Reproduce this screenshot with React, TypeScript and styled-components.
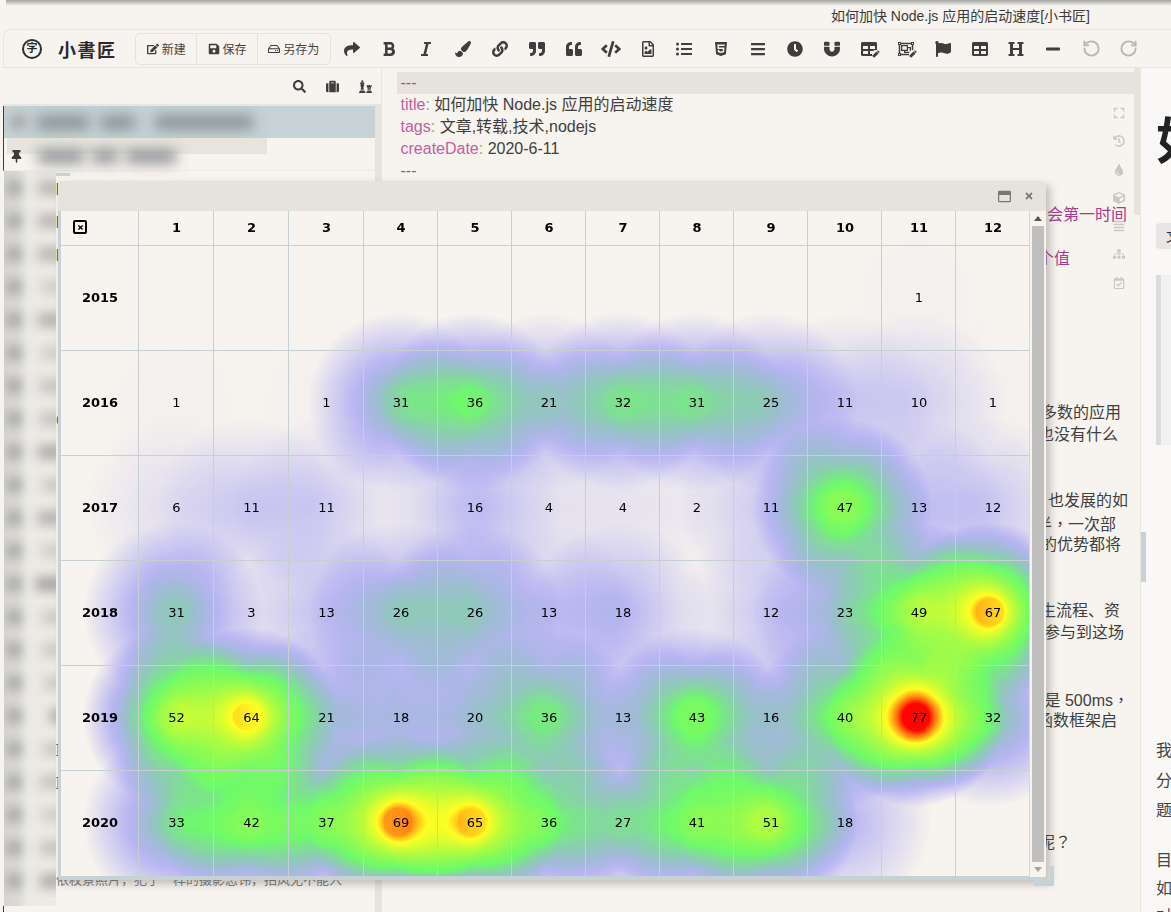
import { useEffect, useRef } from 'react';
import styled, { createGlobalStyle } from 'styled-components';
import {
  FaEdit, FaSave, FaRegHdd, FaShare, FaBold, FaItalic, FaPaintBrush, FaLink, FaQuoteRight, FaQuoteLeft,
  FaCode, FaRegFileImage, FaListUl, FaHtml5, FaBars, FaClock, FaMagnet, FaTable, FaRegObjectGroup, FaFlag,
  FaHeading, FaMinus, FaSearch, FaSuitcase, FaChess, FaThumbtack, FaExpand, FaHistory, FaTint, FaCube,
  FaAlignJustify, FaSitemap, FaRegCalendarCheck, FaRegWindowMaximize, FaTimes, FaPen,
} from 'react-icons/fa';
import { RotateCcw, RotateCw } from 'lucide-react';

const colors = {
  bg: '#f7f3ee',
  panel: '#e6e2dc',
  line: '#e9e5df',
  grid: '#c6d0d3',
  blue: '#c6d2d5',
  icon: '#3e3e3e',
  faint: '#c9c7c3',
};

const sans = `"Liberation Sans", "Noto Sans CJK SC", sans-serif`;

const YEARS = [2015, 2016, 2017, 2018, 2019, 2020];
const COUNTS: (number | null)[][] = [
  [null, null, null, null, null, null, null, null, null, null, 1, null],
  [1, null, 1, 31, 36, 21, 32, 31, 25, 11, 10, 1],
  [6, 11, 11, null, 16, 4, 4, 2, 11, 47, 13, 12],
  [31, 3, 13, 26, 26, 13, 18, null, 12, 23, 49, 67],
  [52, 64, 21, 18, 20, 36, 13, 43, 16, 40, 77, 32],
  [33, 42, 37, 69, 65, 36, 27, 41, 51, 18, null, null],
];
const COL_LEFT = [78, 153, 228, 303, 377, 451, 525, 599, 673, 747, 821, 895];

const HEAT_W = 969;
const HEAT_H = 666;
const HEAT_R = 90;

function makePalette() {
  const c = document.createElement('canvas');
  c.width = 256;
  c.height = 1;
  const ctx = c.getContext('2d')!;
  const g = ctx.createLinearGradient(0, 0, 256, 0);
  g.addColorStop(0.25, 'rgb(0,0,255)');
  g.addColorStop(0.55, 'rgb(0,255,0)');
  g.addColorStop(0.85, 'rgb(255,255,0)');
  g.addColorStop(1, 'rgb(255,0,0)');
  ctx.fillStyle = g;
  ctx.fillRect(0, 0, 256, 1);
  return ctx.getImageData(0, 0, 256, 1).data;
}

function HeatLayer() {
  const ref = useRef<HTMLCanvasElement>(null);

  useEffect(() => {
    const ctx = ref.current!.getContext('2d', { willReadFrequently: true })!;
    COUNTS.forEach((row, r) => {
      row.forEach((value, c) => {
        if (!value) return;
        const x = COL_LEFT[c] + 37 - 3;
        const y = 35 + r * 105 + 52 - 1;
        const g = ctx.createRadialGradient(x, y, HEAT_R * 0.15, x, y, HEAT_R);
        g.addColorStop(0, 'rgba(0,0,0,1)');
        g.addColorStop(1, 'rgba(0,0,0,0)');
        ctx.globalAlpha = value / 77;
        ctx.fillStyle = g;
        ctx.fillRect(x - HEAT_R, y - HEAT_R, HEAT_R * 2, HEAT_R * 2);
      });
    });
    const palette = makePalette();
    const img = ctx.getImageData(0, 0, HEAT_W, HEAT_H);
    const d = img.data;
    for (let i = 3; i < d.length; i += 4) {
      const a = d[i];
      if (!a) continue;
      d[i - 3] = palette[a * 4];
      d[i - 2] = palette[a * 4 + 1];
      d[i - 1] = palette[a * 4 + 2];
    }
    ctx.putImageData(img, 0, 0);
  }, []);

  return <HeatCanvas ref={ref} width={HEAT_W} height={HEAT_H} />;
}

const TOOLS = [
  <FaShare />, <FaBold />, <FaItalic />, <FaPaintBrush />, <FaLink />, <FaQuoteRight />, <FaQuoteLeft />,
  <FaCode size={20} />, <FaRegFileImage />, <FaListUl />, <FaHtml5 />, <FaBars />, <FaClock />, <FaMagnet />,
];

const SIDE_ROWS = [
  { w: 26, tone: 0.5, mark: '[' },
  { w: 26, tone: 0.5, mark: '[' },
  { w: 26, tone: 0.5, mark: '[' },
  { w: 22, tone: 0.28, mark: '' },
  { w: 26, tone: 0.55, mark: '' },
  { w: 22, tone: 0.28, mark: '' },
  { w: 24, tone: 0.38, mark: '' },
  { w: 24, tone: 0.38, mark: '(' },
  { w: 26, tone: 0.62, mark: '' },
  { w: 22, tone: 0.32, mark: '' },
  { w: 26, tone: 0.55, mark: '' },
  { w: 22, tone: 0.28, mark: '' },
  { w: 28, tone: 0.7, mark: '' },
  { w: 22, tone: 0.32, mark: '' },
  { w: 22, tone: 0.32, mark: '' },
  { w: 20, tone: 0.32, mark: '' },
  { w: 14, tone: 0.65, mark: '' },
  { w: 22, tone: 0.32, mark: ']' },
  { w: 24, tone: 0.38, mark: ']' },
  { w: 22, tone: 0.28, mark: '' },
  { w: 24, tone: 0.38, mark: '' },
];

export default function App() {
  return (
    <Page>
      <GlobalStyle />
      <TopShade />
      <TitleBar>如何加快 Node.js 应用的启动速度[小书匠]</TitleBar>

      <Toolbar>
        <Logo>
          <LogoMark>字</LogoMark>
          <LogoText>小書匠</LogoText>
        </Logo>
        <FileGroup>
          <FileButton $w={61}><FaEdit />新建</FileButton>
          <FileButton $w={61}><FaSave />保存</FileButton>
          <FileButton $w={74}><FaRegHdd />另存为</FileButton>
        </FileGroup>
        {TOOLS.map((icon, i) => <ToolButton key={i}>{icon}</ToolButton>)}
        <ToolButton><PenBadge><FaTable /><FaPen /></PenBadge></ToolButton>
        <ToolButton><PenBadge><FaRegObjectGroup /><FaPen /></PenBadge></ToolButton>
        <ToolButton><FaFlag /></ToolButton>
        <ToolButton><FaTable /></ToolButton>
        <ToolButton><FaHeading /></ToolButton>
        <ToolButton><FaMinus /></ToolButton>
        <HistoryButton><RotateCcw size={19} /></HistoryButton>
        <HistoryButton><RotateCw size={19} /></HistoryButton>
      </Toolbar>

      <Main>
        <Sidebar>
          <SideHeader>
            <SideIcon><FaSearch /></SideIcon>
            <SideIcon><FaSuitcase /></SideIcon>
            <SideIcon><FaChess /></SideIcon>
          </SideHeader>
          <SideBody>
            <NoteList>
              <ActiveNote>
                <BlurDot />
                <BlurText $w={52} $gap={6} />
                <BlurText $w={34} $gap={14} />
                <BlurText $w={98} $gap={0} />
              </ActiveNote>
              <PinnedNote>
                <PinPatch />
                <PinIcon><FaThumbtack /></PinIcon>
                <BlurText $w={46} $gap={2} />
                <BlurText $w={26} $gap={2} />
                <BlurText $w={50} $gap={0} />
              </PinnedNote>
              {SIDE_ROWS.map((row, i) => (
                <NoteRow key={i}>
                  <NoteBlur>
                    <BlurDot />
                    <BlurBar $w={row.w} $tone={row.tone} />
                  </NoteBlur>
                  <NoteMark>{row.mark}</NoteMark>
                </NoteRow>
              ))}
              <NoteRow>
                <NoteBlur>
                  <BlurDot />
                  <BlurBar $w={24} $tone={0.62} />
                </NoteBlur>
                <NoteSnippet>依枚景照片，犯了一样的摄影忌讳，拍风无不能入</NoteSnippet>
              </NoteRow>
              <BlurTail />
              <ListEnd />
            </NoteList>
            <SideScroll />
          </SideBody>
        </Sidebar>

        <Editor>
          <ActiveLine><Meta>---</Meta></ActiveLine>
          <Line><Key>title</Key><Colon>:</Colon> 如何加快 Node.js 应用的启动速度</Line>
          <Line><Key>tags</Key><Colon>:</Colon> 文章,转载,技术,nodejs</Line>
          <Line><Key>createDate</Key><Colon>:</Colon> 2020-6-11</Line>
          <Line><Meta>---</Meta></Line>
          <Line />
          <EndLine $end={1126} $accent>会第一时间</EndLine>
          <Line />
          <EndLine $end={1069} $accent>个值</EndLine>
          <Blank $lines={6} />
          <EndLine $end={1120}>多数的应用</EndLine>
          <EndLine $end={1117}>也没有什么</EndLine>
          <Blank $lines={2} />
          <EndLine $end={1127}>也发展的如</EndLine>
          <EndLine $end={1115}>半<Punct>，</Punct>一次部</EndLine>
          <EndLine $end={1120}>的优势都将</EndLine>
          <Blank $lines={2} />
          <EndLine $end={1119}>生流程、资</EndLine>
          <EndLine $end={1123}>参与到这场</EndLine>
          <Blank $lines={2} />
          <EndLine $end={1128}>是 500ms<Punct>，</Punct></EndLine>
          <EndLine $end={1116}>函数框架启</EndLine>
          <Blank $lines={4} />
          <EndLine $end={1070} $shift={10}>呢<Punct>？</Punct></EndLine>
          <Blank $lines={2} />
          <Line $shift={15}><Fence>```</Fence></Line>
          <SideTools>
            <FaExpand /><FaHistory /><FaTint /><FaCube /><FaAlignJustify /><FaSitemap /><FaRegCalendarCheck />
          </SideTools>
          <EditorScroll />
        </Editor>

        <Preview>
          <ScrollMark />
          <H1>如何加快</H1>
          <TagRow><Tag>文章</Tag></TagRow>
          <Quote />
          <ParaBlock>
            <Para>我们一直在讨论</Para>
            <Para>分享一些经验</Para>
            <Para>题目</Para>
          </ParaBlock>
          <TightBlock>
            <TightPara>目前</TightPara>
            <TightPara>如果</TightPara>
            <TightPara>对于</TightPara>
          </TightBlock>
        </Preview>
      </Main>

      <Dialog>
        <CornerTop />
        <CornerBottom />
        <DialogHeader>
          <MaxIcon><FaRegWindowMaximize /></MaxIcon>
          <CloseIcon><FaTimes /></CloseIcon>
        </DialogHeader>
        <DialogBody>
          <TableArea>
            <HeatLayer />
            <Calendar>
              <thead>
                <tr>
                  <CornerCell><CloseBox><FaTimes /></CloseBox></CornerCell>
                  {COL_LEFT.map((_, i) => <MonthCell key={i} $wide={i < 3}>{i + 1}</MonthCell>)}
                </tr>
              </thead>
              <tbody>
                {COUNTS.map((row, r) => (
                  <tr key={r}>
                    <YearCell>{YEARS[r]}</YearCell>
                    {row.map((v, c) => <CountCell key={c}>{v}</CountCell>)}
                  </tr>
                ))}
              </tbody>
            </Calendar>
          </TableArea>
          <Scrollbar>
            <ArrowUp />
            <Thumb />
            <ArrowDown />
          </Scrollbar>
        </DialogBody>
      </Dialog>
    </Page>
  );
}

const GlobalStyle = createGlobalStyle`
  html, body {
    margin: 0;
    padding: 0;
    background: ${colors.bg};
    overflow: hidden;
  }
  * { box-sizing: border-box; }
`;

const Page = styled.div`
  position: relative;
  width: 1171px;
  height: 912px;
  overflow: hidden;
  background: ${colors.bg};
  font-family: ${sans};
  color: #333;
`;

const TopShade = styled.div`
  position: absolute;
  top: 0;
  left: 6px;
  right: 0;
  height: 6px;
  background: linear-gradient(#a3a6a4, ${colors.bg});
`;

const TitleBar = styled.div`
  height: 29px;
  padding: 8px 81px 0 0;
  display: flex;
  justify-content: flex-end;
  font-size: 14px;
  line-height: 16px;
  color: #3a3a3a;
`;

const Toolbar = styled.div`
  height: 39px;
  margin-left: 3px;
  display: flex;
  align-items: center;
  border-top: 1px solid ${colors.line};
  border-left: 1px solid ${colors.line};
  border-bottom: 1px solid ${colors.line};
  border-top-left-radius: 8px;
`;

const Logo = styled.div`
  width: 128px;
  padding-left: 18px;
  display: flex;
  align-items: center;
  gap: 16px;
  margin-right: 3px;
`;

const LogoMark = styled.span`
  width: 20px;
  height: 20px;
  border: 2px solid #2e2e2e;
  border-radius: 50%;
  font-size: 11px;
  line-height: 15px;
  font-weight: 700;
  text-align: center;
  color: #2e2e2e;
`;

const LogoText = styled.span`
  font-family: "Noto Sans CJK JP", sans-serif;
  font-size: 18px;
  line-height: 20px;
  font-weight: 700;
  color: #2b2b2b;
  letter-spacing: 1.5px;
  white-space: nowrap;
`;

const FileGroup = styled.div`
  display: flex;
  height: 32px;
  width: 196px;
  border: 1px solid ${colors.panel};
  border-radius: 5px;
  margin-right: 3px;
`;

const FileButton = styled.div<{ $w: number }>`
  width: ${(p) => p.$w}px;
  display: flex;
  align-items: center;
  justify-content: center;
  gap: 3px;
  font-size: 12px;
  color: #444;
  white-space: nowrap;
  & + & { border-left: 1px solid ${colors.panel}; }
  svg { font-size: 12px; color: ${colors.icon}; }
`;

const ToolButton = styled.div`
  width: 36.9px;
  flex: none;
  display: flex;
  justify-content: center;
  align-items: center;
  font-size: 16px;
  color: ${colors.icon};
`;

const HistoryButton = styled(ToolButton)`
  color: #b9b8b4;
  position: relative;
  left: 1px;
  svg { stroke-width: 2.4px; }
`;

const PenBadge = styled.span`
  position: relative;
  display: flex;
  svg:last-child {
    position: absolute;
    right: -3px;
    bottom: -1px;
    font-size: 8px;
    background: ${colors.bg};
    border-radius: 50%;
  }
`;

const Main = styled.div`
  height: 844px;
  display: flex;
`;

const Sidebar = styled.div`
  width: 379px;
  margin-left: 3px;
  flex: none;
  border-right: 1px solid ${colors.line};
  display: flex;
  flex-direction: column;
`;

const SideHeader = styled.div`
  height: 38px;
  padding-right: 9px;
  display: flex;
  justify-content: flex-end;
  align-items: center;
  gap: 19px;
  border-bottom: 2px solid ${colors.line};
`;

const SideIcon = styled.span`
  display: flex;
  width: 14px;
  justify-content: center;
  font-size: 13px;
  color: ${colors.icon};
`;

const SideBody = styled.div`
  flex: 1;
  display: flex;
  min-height: 0;
`;

const NoteList = styled.div`
  flex: 1;
  min-width: 0;
  overflow: hidden;
`;

const SideScroll = styled.div`
  width: 6px;
  flex: none;
  background: ${colors.panel};
`;

const ActiveNote = styled.div`
  height: 32px;
  padding-left: 4px;
  display: flex;
  align-items: center;
  overflow: hidden;
  background: ${colors.blue};
  border-left: 1px solid #3b3b3b;
`;

const BlurDot = styled.span`
  width: 16px;
  height: 16px;
  flex: none;
  margin: 0 5px 0 2px;
  border-radius: 50%;
  background: #a2a3a1;
  filter: blur(6px);
`;

const BlurText = styled.span<{ $w: number; $gap: number }>`
  width: ${(p) => p.$w}px;
  height: 13px;
  flex: none;
  margin-left: 6px;
  margin-right: ${(p) => p.$gap}px;
  background: #858b8e;
  filter: blur(7px);
`;

const PinnedNote = styled.div`
  position: relative;
  height: 33px;
  padding: 4px 0 0 3px;
  display: flex;
  align-items: center;
  border-left: 1px solid #3b3b3b;
  border-bottom: 1px dotted ${colors.panel};
`;

const PinPatch = styled.div`
  position: absolute;
  left: 3px;
  top: 0;
  width: 260px;
  height: 16px;
  background: #e7e4de;
`;

const PinIcon = styled.span`
  position: relative;
  width: 19px;
  margin-right: 6px;
  display: flex;
  justify-content: center;
  font-size: 13px;
  color: #3b3b3b;
`;

const NoteRow = styled.div`
  height: 33px;
  margin-left: 1px;
  display: flex;
  align-items: center;
`;

const blurFill = 'linear-gradient(90deg, #d6d5d1 0, #dbdad6 14px, #eceae5 24px, #eeebe6 100%)';

const NoteBlur = styled.div`
  width: 52px;
  height: 100%;
  flex: none;
  display: flex;
  align-items: center;
  overflow: hidden;
  background: ${blurFill};
`;

const BlurBar = styled.span<{ $w: number; $tone: number }>`
  width: ${(p) => p.$w}px;
  height: 14px;
  flex: none;
  margin-left: auto;
  margin-right: -8px;
  background: rgba(130, 130, 128, ${(p) => p.$tone});
  filter: blur(6px);
`;

const BlurTail = styled.div`
  width: 52px;
  height: 9px;
  margin-left: 1px;
  background: ${blurFill};
`;

const NoteMark = styled.span`
  font-size: 13px;
  color: #555;
`;

const NoteSnippet = styled.span`
  position: relative;
  top: -2px;
  font-size: 13px;
  color: #777;
  white-space: nowrap;
`;

const ListEnd = styled.div`
  height: 8px;
  border-left: 1px solid #3b3b3b;
`;

const Editor = styled.div`
  position: relative;
  width: 758px;
  flex: none;
  padding: 4px 6px 0 15px;
  overflow: hidden;
  font-size: 16px;
  line-height: 22px;
  color: #3f3f3f;
`;

const Line = styled.div<{ $shift?: number }>`
  height: 22px;
  padding-left: 3.5px;
  margin-top: ${(p) => p.$shift ?? 0}px;
  white-space: nowrap;
`;

const ActiveLine = styled(Line)`
  background: ${colors.panel};
`;

const EndLine = styled.div<{ $end: number; $accent?: boolean; $shift?: number }>`
  height: 22px;
  margin-top: ${(p) => p.$shift ?? 0}px;
  padding-right: ${(p) => 1133 - p.$end}px;
  text-align: right;
  white-space: nowrap;
  color: ${(p) => (p.$accent ? '#a93a8e' : '#3f3f3f')};
`;

const Punct = styled.span`
  font-family: "Noto Sans CJK TC", sans-serif;
`;

const Blank = styled.div<{ $lines: number }>`
  height: ${(p) => p.$lines * 22}px;
`;

const Key = styled.span`
  color: #c2619f;
`;

const Colon = styled.span`
  color: #4cc25c;
`;

const Meta = styled.span`
  color: #8b5d86;
`;

const Fence = styled.span`
  color: #4cc25c;
`;

const SideTools = styled.div`
  position: absolute;
  top: 39px;
  right: 14px;
  width: 14px;
  display: flex;
  flex-direction: column;
  align-items: center;
  gap: 16.3px;
  font-size: 12px;
  color: ${colors.faint};
  svg { display: block; }
`;

const EditorScroll = styled.div`
  position: absolute;
  top: 0;
  right: 0;
  width: 6px;
  height: 147px;
  background: ${colors.panel};
`;

const Preview = styled.div`
  position: relative;
  flex: 1;
  min-width: 0;
  padding: 0 0 0 15px;
  overflow: hidden;
  background: #f9f8f7;
  border-left: 1px solid ${colors.line};
  color: #444;
`;

const ScrollMark = styled.div`
  position: absolute;
  left: 0;
  top: 464px;
  width: 5px;
  height: 50px;
  background: ${colors.blue};
`;

const H1 = styled.div`
  margin-top: 46px;
  font-size: 50px;
  line-height: 56px;
  font-weight: 700;
  color: #222;
  white-space: nowrap;
`;

const TagRow = styled.div`
  margin-top: 53px;
  height: 26px;
`;

const Tag = styled.span`
  display: inline-block;
  padding: 0 10px;
  height: 26px;
  line-height: 26px;
  border-radius: 4px;
  font-size: 14px;
  background: #e8e5e7;
  color: #333;
  white-space: nowrap;
`;

const Quote = styled.div`
  margin-top: 26px;
  height: 170px;
  width: 400px;
  background: #f2f1f1;
  border-left: 5px solid #dcdbe0;
`;

const ParaBlock = styled.div`
  margin-top: 291px;
`;

const Para = styled.div`
  font-size: 16px;
  line-height: 30px;
  white-space: nowrap;
`;

const TightBlock = styled.div`
  margin-top: 21px;
`;

const TightPara = styled.div`
  font-size: 16px;
  line-height: 28px;
  white-space: nowrap;
`;

const Dialog = styled.div`
  position: absolute;
  left: 58px;
  top: 181px;
  width: 988px;
  height: 699px;
  display: flex;
  flex-direction: column;
  background: ${colors.bg};
  border-radius: 3px 4px 4px 3px;
  border-left: 3px solid ${colors.blue};
  border-bottom: 3px solid ${colors.blue};
  box-shadow: 4px 4px 8px rgba(90, 90, 90, 0.35);
`;

const CornerTop = styled.div`
  position: absolute;
  left: -5px;
  top: -8px;
  width: 14px;
  height: 3px;
  background: ${colors.blue};
`;

const CornerBottom = styled.div`
  position: absolute;
  right: -8px;
  bottom: -9px;
  width: 20px;
  height: 20px;
  border-right: 4px solid ${colors.blue};
  border-bottom: 6px solid ${colors.blue};
`;

const DialogHeader = styled.div`
  height: 30px;
  flex: none;
  margin-left: -3px;
  padding-right: 12px;
  display: flex;
  justify-content: flex-end;
  align-items: center;
  gap: 13px;
  background: ${colors.panel};
  border-radius: 3px 4px 0 0;
`;

const MaxIcon = styled.span`
  display: flex;
  font-size: 13px;
  color: #777;
`;

const CloseIcon = styled.span`
  display: flex;
  font-size: 10px;
  color: #777;
`;

const DialogBody = styled.div`
  flex: 1;
  display: flex;
  min-height: 0;
`;

const TableArea = styled.div`
  position: relative;
  width: 969px;
  flex: none;
`;

const HeatCanvas = styled.canvas`
  position: absolute;
  left: 0;
  top: 0;
`;

const Calendar = styled.table`
  position: relative;
  width: 969px;
  table-layout: fixed;
  border-collapse: separate;
  border-spacing: 0;
  font-family: "DejaVu Sans", sans-serif;
  font-size: 13px;
  color: #000;
  td, th {
    padding: 0 0 2px 1px;
    text-align: center;
    border-right: 1px solid ${colors.grid};
    border-bottom: 1px solid ${colors.grid};
  }
  td:last-child, th:last-child { border-right-color: #d3d8d8; }
  tbody tr:last-child td { height: 106px; }
`;

const CornerCell = styled.th`
  width: 78px;
  height: 35px;
  text-align: left !important;
  padding-left: 12px !important;
  line-height: 0;
`;

const CloseBox = styled.span`
  width: 14px;
  height: 14px;
  display: inline-flex;
  align-items: center;
  justify-content: center;
  border: 2.5px solid #000;
  border-radius: 2px;
  font-size: 7px;
`;

const MonthCell = styled.th<{ $wide: boolean }>`
  width: ${(p) => (p.$wide ? 75 : 74)}px;
  height: 35px;
  font-weight: 700;
`;

const YearCell = styled.td`
  height: 105px;
  font-weight: 700;
`;

const CountCell = styled.td`
  height: 105px;
`;

const Scrollbar = styled.div`
  width: 12px;
  margin-left: 2px;
  padding: 5px 0;
  display: flex;
  flex-direction: column;
  align-items: center;
  gap: 5px;
`;

const ArrowUp = styled.div`
  width: 0;
  height: 0;
  border: 4px solid transparent;
  border-top: 0;
  border-bottom: 5px solid #555;
`;

const Thumb = styled.div`
  flex: 1;
  width: 100%;
  background: #bfbfbd;
`;

const ArrowDown = styled.div`
  width: 0;
  height: 0;
  border: 4px solid transparent;
  border-bottom: 0;
  border-top: 5px solid #a5a5a5;
`;
